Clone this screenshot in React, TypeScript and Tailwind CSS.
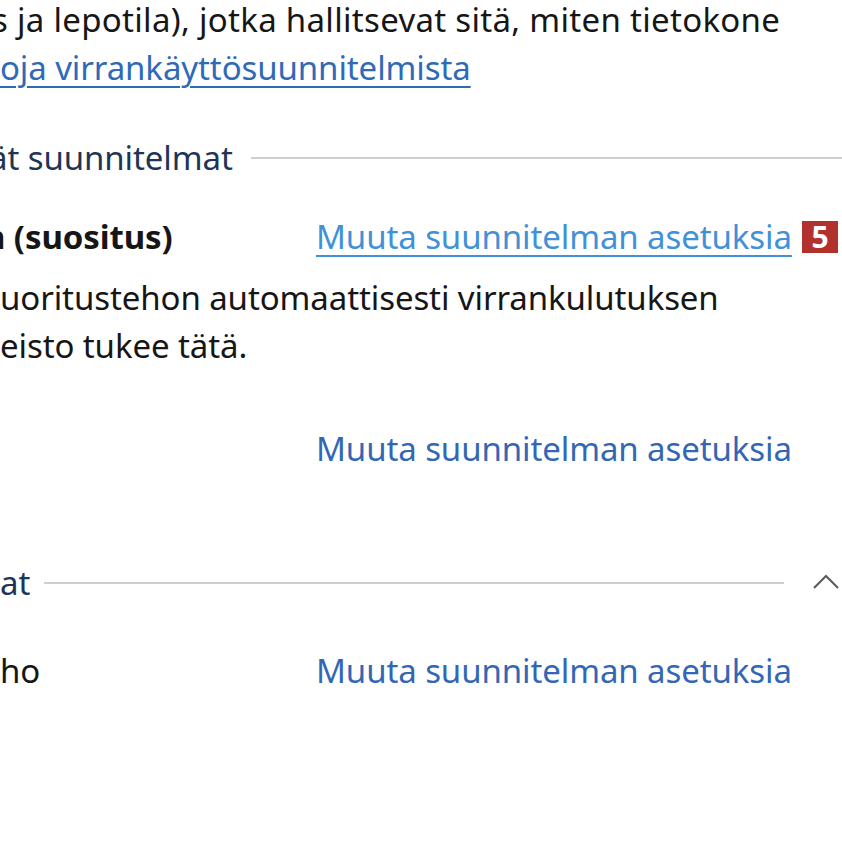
import React from "react";

const linkHover = "text-[#4191d8] underline decoration-[2px] underline-offset-[6px]";
const link = "text-[#3367b5]";

export default function App() {
  return (
    <div
      className="w-[842px] h-[856px] bg-white overflow-hidden text-[#161616] text-[33px] leading-[48px] tracking-[-0.1px]"
      style={{ fontFamily: "'Noto Sans', 'Open Sans', sans-serif" }}
    >
      <div className="-mt-[4px]">
        <p className="-ml-[8px] whitespace-nowrap tracking-[0.3px]">s ja lepotila), jotka hallitsevat sitä, miten tietokone</p>
        <p className="whitespace-nowrap">
          <a className="text-[#2f6ab8] underline decoration-[2px] underline-offset-[6px]">oja virrankäyttösuunnitelmista</a>
        </p>
      </div>

      <div className="mt-[42px] flex items-center">
        <span className="-ml-[11px] text-[#1e3556] whitespace-nowrap">ät suunnitelmat</span>
        <div className="ml-[18px] flex-1 h-[2px] bg-[#cfcfcf]" />
      </div>

      <div className="mt-[31px] flex items-center">
        <div className="w-[316px] whitespace-nowrap font-bold">
          <span className="-ml-[16px]">n (suositus)</span>
        </div>
        <a className={`${linkHover} whitespace-nowrap`}>Muuta suunnitelman asetuksia</a>
        <span className="ml-[10px] w-[36px] h-[32px] bg-[#b3312c] text-white font-bold text-[30px] leading-[32px] flex items-center justify-center">
          5
        </span>
      </div>

      <div className="mt-[13px]">
        <p className="whitespace-nowrap">uoritustehon automaattisesti virrankulutuksen</p>
        <p className="whitespace-nowrap">eisto tukee tätä.</p>
      </div>

      <div className="mt-[55px] flex">
        <div className="w-[316px]" />
        <a className={`${link} whitespace-nowrap`}>Muuta suunnitelman asetuksia</a>
      </div>

      <div className="mt-[86px] flex items-center">
        <span className="text-[#1e3556] whitespace-nowrap">at</span>
        <div className="ml-[14px] w-[740px] h-[2px] bg-[#cfcfcf]" />
        <svg className="ml-[28px] -mt-[4px]" width="28" height="18" viewBox="0 0 28 18">
          <path d="M2 16 L14 4 L26 16" fill="none" stroke="#5a5a5a" strokeWidth="2" />
        </svg>
      </div>

      <div className="mt-[40px] flex">
        <div className="w-[316px] whitespace-nowrap">ho</div>
        <a className={`${link} whitespace-nowrap`}>Muuta suunnitelman asetuksia</a>
      </div>
    </div>
  );
}
